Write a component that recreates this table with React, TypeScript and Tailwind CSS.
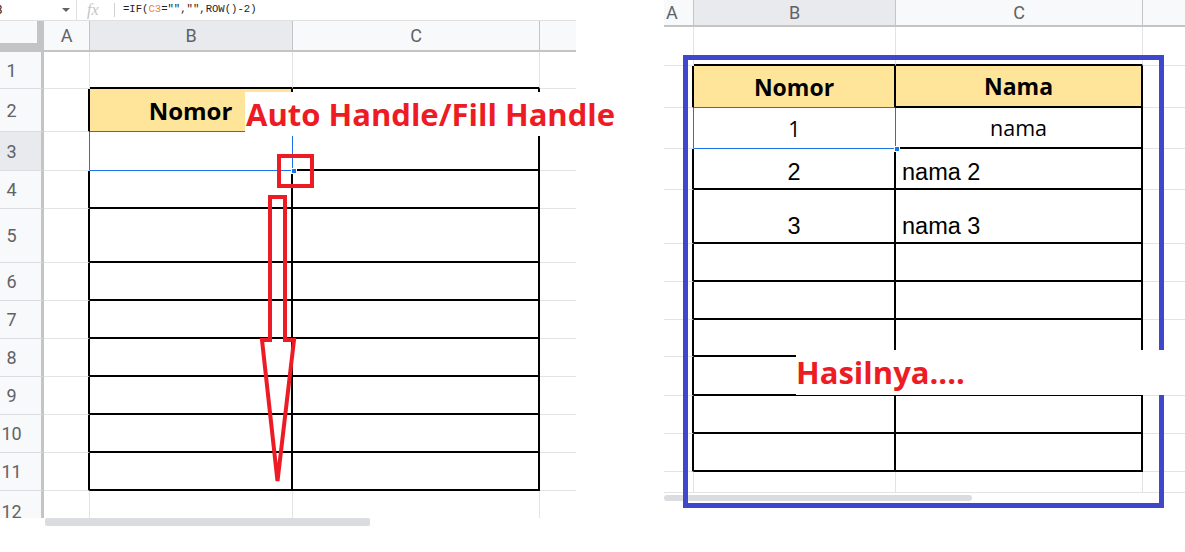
import React from "react";

type Kind = "g" | "k" | "b" | "n";

const rightCls = (k: Kind) =>
  k === "g"
    ? "border-r border-r-[#e2e3e3]"
    : k === "k"
    ? "border-r-2 border-r-black"
    : k === "b"
    ? "border-r border-r-[#1a73e8]"
    : "";
const bottomCls = (k: Kind) =>
  k === "g"
    ? "border-b border-b-[#e2e3e3]"
    : k === "k"
    ? "border-b-2 border-b-black"
    : k === "b"
    ? "border-b border-b-[#1a73e8]"
    : "";

function tableR(r: number, c: number): Kind {
  const inT = r >= 2 && r <= 11;
  if (c === 0) return inT ? (r === 3 ? "b" : "k") : "g";
  if (c === 1) return inT ? (r === 3 ? "b" : "k") : "g";
  if (c === 2) return inT ? "k" : "g";
  return "n";
}
function tableB(r: number, c: number): Kind {
  if (r === 12) return "n";
  if (c === 1) {
    if (r === 1) return "k";
    if (r === 2 || r === 3) return "b";
    if (r <= 11) return "k";
    return "g";
  }
  if (c === 2) {
    if (r <= 11) return "k";
    return "g";
  }
  return "g";
}

const ROWS = [1, 2, 3, 4, 5, 6, 7, 8, 9, 10, 11, 12];

const Caret = () => (
  <svg width="8" height="4" viewBox="0 0 8 4">
    <polygon points="0,0 8,0 4,4" fill="#5f6368" />
  </svg>
);

function LeftSheet() {
  return (
    <div className="w-[576px] shrink-0 flex flex-col">
      {/* formula bar */}
      <div className="h-[21px] flex items-stretch border-b border-b-[#e0e0e0] font-['Roboto',sans-serif]">
        <div className="w-[76px] flex items-center justify-between pr-[6px] overflow-hidden">
          <span className="-ml-[12px] text-[12px] text-[#222]">C3</span>
          <Caret />
        </div>
        <div className="w-px bg-[#e0e0e0]" />
        <div className="w-[37px] flex items-center pl-[10px]">
          <span className="font-['Liberation_Serif',serif] italic text-[16px] text-[#c4c4c4] leading-none">
            fx
          </span>
        </div>
        <div className="w-px my-[3px] bg-[#d0d0d0]" />
        <div className="flex items-center pl-[8px] font-['Liberation_Mono',monospace] text-[10.6px] text-[#222] whitespace-pre">
          <span>=IF(</span>
          <span className="text-[#f4811f]">C3</span>
          <span>="","",ROW()-2)</span>
        </div>
      </div>
      {/* grid */}
      <div className="grid grid-cols-[44px_46px_203px_247px_36px] grid-rows-[31px_37px_43px_39px_38px_54px_38px_38px_38px_38px_38px_38px_27px] font-['Roboto',sans-serif]">
        <div className="bg-[#f8f9fa] border-r-[7px] border-b-[9px] border-[#c4c4c4]" />
        {["A", "B", "C", ""].map((h, i) => (
          <div
            key={"h" + i}
            className={
              "flex items-center justify-center text-[18px] text-[#5f6368] border-b-2 border-b-[#c4c4c4] " +
              (i < 3 ? "border-r border-r-[#c4c4c4] " : "") +
              (i === 1 ? "bg-[#e8eaed]" : "bg-[#f8f9fa]")
            }
          >
            {h}
          </div>
        ))}
        {ROWS.map((r) => (
          <React.Fragment key={"r" + r}>
            <div
              className={
                "flex justify-center pr-[18px] text-[18px] text-[#5f6368] border-r-[3px] border-r-[#c4c4c4] overflow-hidden " +
                (r === 12 ? "items-start pt-[7px] " : "items-center border-b border-b-[#dadce0] ") +
                (r === 3 ? "bg-[#e8eaed]" : "bg-[#f8f9fa]")
              }
            >
              {r}
            </div>
            {[0, 1, 2, 3].map((c) => (
              <div
                key={"c" + r + c}
                className={
                  rightCls(tableR(r, c)) +
                  " " +
                  bottomCls(tableB(r, c)) +
                  (r === 2 && c === 1
                    ? " bg-[#ffe599] flex items-end justify-center pb-[4px] font-['Open_Sans',sans-serif] font-bold text-[24px] text-black leading-[32px]"
                    : "")
                }
              >
                {r === 2 && c === 1 ? "Nomor" : null}
              </div>
            ))}
          </React.Fragment>
        ))}
      </div>
      <div className="flex h-[8px]">
        <div className="w-[45px]" />
        <div className="w-[325px] h-[8px] bg-[#dadce0] rounded-[2px]" />
      </div>
    </div>
  );
}

function rightContent(r: number, c: number): React.ReactNode {
  if (r === 2 && (c === 1 || c === 2))
    return (
      <div className="h-full bg-[#ffe599] flex items-end justify-center pb-[4px] font-['Open_Sans',sans-serif] font-bold text-[23px] leading-[31px] text-black">
        {c === 1 ? "Nomor" : "Nama"}
      </div>
    );
  if (r === 3 && (c === 1 || c === 2))
    return (
      <div className="h-full flex items-end justify-center pb-[5px] font-['Open_Sans',sans-serif] text-[21.5px] leading-[28px] text-black">
        {c === 1 ? "1" : "nama"}
      </div>
    );
  if ((r === 4 || r === 5) && c === 1)
    return (
      <div className="h-full flex items-end justify-center pb-[3px] font-['Liberation_Sans',Arial,sans-serif] text-[23.5px] leading-[26px] text-black">
        {r === 4 ? "2" : "3"}
      </div>
    );
  if ((r === 4 || r === 5) && c === 2)
    return (
      <div className="h-full flex items-end justify-start pl-[6px] pb-[3px] font-['Liberation_Sans',Arial,sans-serif] text-[23.5px] leading-[26px] text-black">
        {r === 4 ? "nama 2" : "nama 3"}
      </div>
    );
  return null;
}

function RightSheet() {
  return (
    <div className="w-[521px] shrink-0 flex flex-col">
      <div className="grid grid-cols-[30px_202px_247px_42px] grid-rows-[27px_39px_42px_41px_41px_54px_38px_38px_37px_39px_38px_38px_21px] font-['Roboto',sans-serif]">
        {["A", "B", "C", ""].map((h, i) => (
          <div
            key={"h" + i}
            className={
              "flex items-center text-[18px] text-[#5f6368] border-b-2 border-b-[#c4c4c4] " +
              (i === 0 ? "justify-start pl-[2px] " : "justify-center ") +
              (i < 3 ? "border-r border-r-[#c4c4c4] " : "") +
              (i === 1 ? "bg-[#e8eaed]" : "bg-[#f8f9fa]")
            }
          >
            {h}
          </div>
        ))}
        {ROWS.map((r) => (
          <React.Fragment key={"r" + r}>
            {[0, 1, 2, 3].map((c) => (
              <div
                key={"c" + r + c}
                className={rightCls(tableR(r, c)) + " " + bottomCls(r === 12 ? "g" : tableB(r, c))}
              >
                {rightContent(r, c)}
              </div>
            ))}
          </React.Fragment>
        ))}
      </div>
      <div className="h-[2px]" />
      <div className="w-[308px] h-[6px] bg-[#dadce0] rounded-full" />
    </div>
  );
}

export default function App() {
  return (
    <div className="relative w-[1185px] h-[552px] bg-white overflow-hidden flex">
      <LeftSheet />
      <div className="w-[88px] shrink-0" />
      <RightSheet />

      {/* fill handles */}
      <div className="absolute left-[291px] top-[168px] w-[6px] h-[6px] bg-[#1a73e8] border border-white" />
      <div className="absolute left-[894px] top-[146px] w-[6px] h-[6px] bg-[#1a73e8] border border-white" />

      {/* annotations left */}
      <div className="absolute left-[245px] top-[92px] w-[372px] h-[44px] bg-white flex items-center pl-[1px] font-['Open_Sans',sans-serif] font-bold text-[31px] text-[#ed1c24] whitespace-nowrap">
        Auto Handle/Fill Handle
      </div>
      <div className="absolute left-[277px] top-[154px] w-[37px] h-[34px] border-4 border-[#ed1c24]" />
      <svg
        className="absolute left-[255px] top-[190px]"
        width="50"
        height="300"
        viewBox="0 0 50 300"
      >
        <path
          d="M15,7 H30 V150 H39 L22.5,291 L7,150 H15 Z"
          fill="none"
          stroke="#ed1c24"
          strokeWidth="4"
          strokeLinejoin="miter"
        />
      </svg>

      {/* annotations right */}
      <div className="absolute left-[683px] top-[55px] w-[481px] h-[453px] border-[5px] border-[#3f48cc]" />
      <div className="absolute left-[796px] top-[350px] w-[389px] h-[45px] bg-white flex items-center font-['Open_Sans',sans-serif] font-bold text-[31px] text-[#ed1c24] whitespace-nowrap">
        Hasilnya....
      </div>
    </div>
  );
}
